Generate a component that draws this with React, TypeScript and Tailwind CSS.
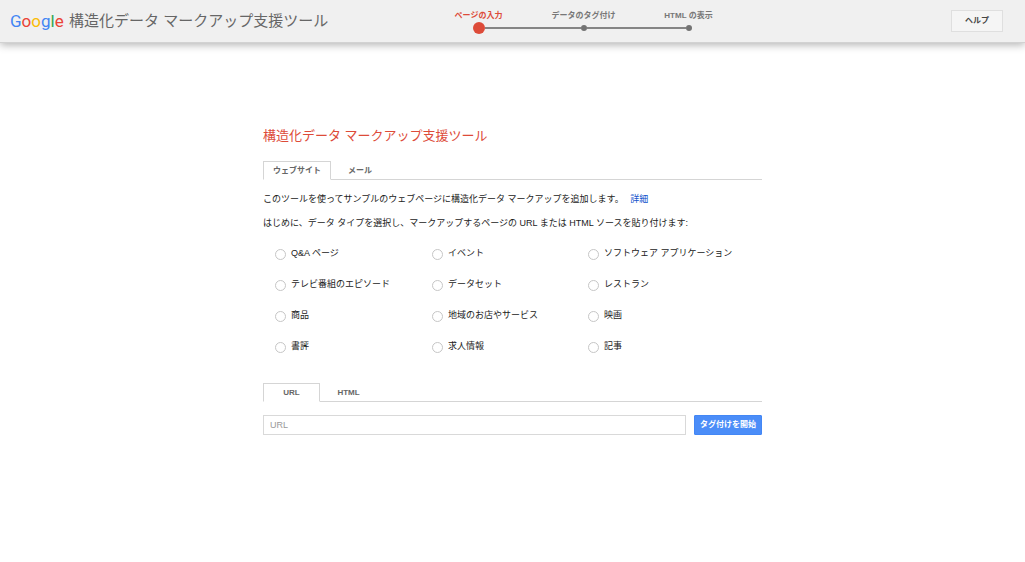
import { useState } from "react"
import clsx from "clsx"

const steps = ["ページの入力", "データのタグ付け", "HTML の表示"]

const dataTypes = [
  "Q&A ページ",
  "イベント",
  "ソフトウェア アプリケーション",
  "テレビ番組のエピソード",
  "データセット",
  "レストラン",
  "商品",
  "地域のお店やサービス",
  "映画",
  "書評",
  "求人情報",
  "記事",
]

function Logo() {
  return (
    <span className="w-[53px] font-['Roboto',sans-serif] text-[17px] leading-6">
      <span className="text-[#4285f4]">G</span>
      <span className="text-[#ea4335]">o</span>
      <span className="text-[#fbbc05]">o</span>
      <span className="text-[#4285f4]">g</span>
      <span className="text-[#34a853]">l</span>
      <span className="text-[#ea4335]">e</span>
    </span>
  )
}

function Stepper() {
  return (
    <ol className="flex pt-px">
      {steps.map((step, i) => (
        <li
          key={step}
          className={clsx(
            "flex w-[105px] flex-col items-center text-[8px] leading-[12px] font-bold",
            i === 0 ? "text-[#dd4b39]" : "text-[#777]"
          )}
        >
          <span>{step}</span>
          <span className="flex h-3 w-full items-center">
            <span className={clsx("h-[2px] flex-1", i > 0 && "bg-[#858585]")} />
            <span className={clsx("rounded-full", i === 0 ? "size-3 bg-[#dd4b39]" : "size-[6px] bg-[#737373]")} />
            <span className={clsx("h-[2px] flex-1", i < steps.length - 1 && "bg-[#858585]")} />
          </span>
        </li>
      ))}
    </ol>
  )
}

function Header() {
  return (
    <header className="flex h-[43px] items-center border-b border-[#d2d2d2] bg-[#f0f0f0] pr-[22px] pl-[10px] shadow-[0_2px_8px_rgba(0,0,0,0.3)]">
      <div className="flex w-[416px] shrink-0 items-center gap-[6px]">
        <Logo />
        <span className="text-[15px] leading-6 whitespace-nowrap text-[#666]">構造化データ マークアップ支援ツール</span>
      </div>
      <Stepper />
      <button
        type="button"
        className="ml-auto h-[22px] w-[52px] border border-[#dfdfdf] bg-[#f5f5f5] text-[8px] font-bold text-[#444]"
      >
        ヘルプ
      </button>
    </header>
  )
}

function Tabs({ labels, tabClass }: { labels: string[]; tabClass: string }) {
  const [active, setActive] = useState(0)

  return (
    <div role="tablist" className="flex h-[19px] border-b border-[#d5d5d5]">
      {labels.map((label, i) => (
        <button
          key={label}
          type="button"
          role="tab"
          aria-selected={i === active}
          onClick={() => setActive(i)}
          className={clsx(
            "h-[19px] border text-[8px] leading-[16px] font-bold text-[#666]",
            tabClass,
            i === active ? "border-[#d5d5d5] border-b-white bg-white" : "border-transparent"
          )}
        >
          {label}
        </button>
      ))}
    </div>
  )
}

export default function App() {
  const [type, setType] = useState("")
  const [url, setUrl] = useState("")

  return (
    <div lang="ja" className="min-h-screen bg-white font-['Liberation_Sans','Noto_Sans_CJK_JP',sans-serif] text-[#222]">
      <Header />
      <main className="mx-auto w-full max-w-[499px] pt-[82px]">
        <h1 className="text-[13px] leading-[22px] text-[#dd4b39]">構造化データ マークアップ支援ツール</h1>

        <div className="mt-[14px]">
          <Tabs labels={["ウェブサイト", "メール"]} tabClass="mr-[7px] px-[9px]" />
        </div>

        <p className="mt-3 text-[9px] leading-[14px]">
          このツールを使ってサンプルのウェブページに構造化データ マークアップを追加します。{" "}
          <a href="#" className="ml-1 text-[#15c]">
            詳細
          </a>
        </p>
        <p className="mt-[10px] text-[9px] leading-[14px]">
          はじめに、データ タイプを選択し、マークアップするページの URL または HTML ソースを貼り付けます:
        </p>

        <fieldset aria-label="データ タイプ" className="mt-[7px] grid grid-cols-[157px_156px_1fr] pl-3">
          {dataTypes.map((name) => (
            <label key={name} className="flex h-[31px] items-center gap-[5px] text-[9px] leading-[14px]">
              <input
                type="radio"
                name="type"
                value={name}
                checked={type === name}
                onChange={() => setType(name)}
                className="mt-[3px] size-[11px] appearance-none rounded-full border border-[#c6c6c6] bg-white checked:border-[3px] checked:border-[#4285f4]"
              />
              {name}
            </label>
          ))}
        </fieldset>

        <div className="mt-[22px]">
          <Tabs labels={["URL", "HTML"]} tabClass="w-[57px]" />
        </div>

        <form className="mt-[13px] flex gap-2" onSubmit={(e) => e.preventDefault()}>
          <input
            type="text"
            aria-label="URL"
            placeholder="URL"
            value={url}
            onChange={(e) => setUrl(e.target.value)}
            className="h-5 min-w-0 flex-1 border border-[#d9d9d9] px-[6px] text-[9px] placeholder:text-[#999]"
          />
          <button
            type="submit"
            className="h-5 w-[68px] rounded-[1px] border border-[#4387f5] bg-[#4b8df8] text-[8px] font-bold whitespace-nowrap text-white"
          >
            タグ付けを開始
          </button>
        </form>
      </main>
    </div>
  )
}
